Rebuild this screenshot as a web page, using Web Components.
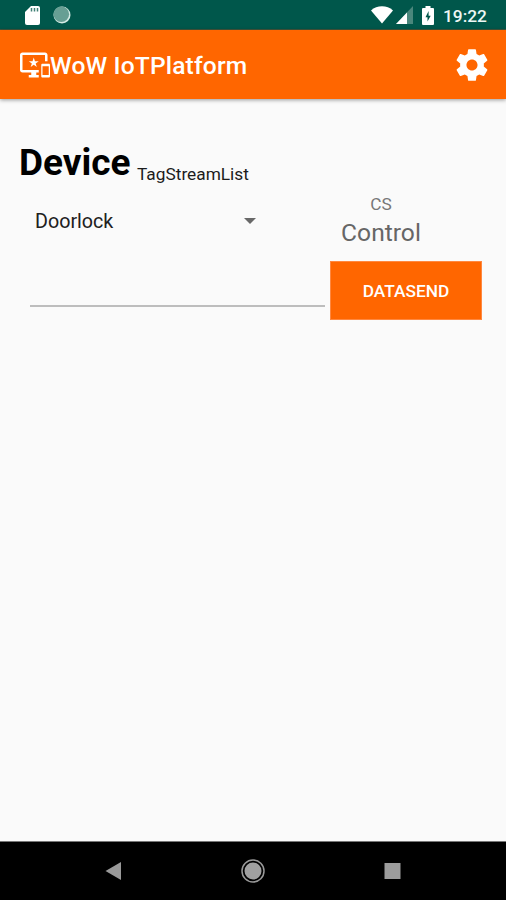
<!DOCTYPE html>
<html lang="en">
<head>
<meta charset="utf-8">
<title>WoW IoTPlatform</title>
<style>
html, body { margin: 0; height: 100%; }
body { font-family: Roboto, "Liberation Sans", sans-serif; background: #fafafa; overflow: hidden; }
</style>
</head>
<body>
<iot-app></iot-app>
<script>
const define = (name, html) => customElements.define(name, class extends HTMLElement {
  constructor() {
    super();
    const t = document.createElement('template');
    t.innerHTML = html;
    this.attachShadow({ mode: 'open' }).append(t.content.cloneNode(true));
  }
});

define('status-bar', `
<style>
:host { display: flex; align-items: center; height: 30px; box-sizing: border-box; background: #00574b; color: #fff; padding: 0 18px 0 25px; border-bottom: 1px solid #44553c; }
svg { display: block; flex: none; }
.sync { margin-left: 12px; margin-right: auto; }
.signal { margin-left: 3px; }
.battery { margin-left: 9px; }
.time { margin-left: 9px; font-size: 17.3px; font-weight: 500; line-height: 20px; padding-top: 2px; width: 45px; white-space: nowrap; color: #eef7f5; }
</style>
<svg width="16" height="20" viewBox="0 0 16 20"><path fill="#fff" d="M6 1h7a2 2 0 0 1 2 2v15a2 2 0 0 1-2 2H2a2 2 0 0 1-2-2V7z"/><path stroke="#3f8075" stroke-width="1.500" d="M6.500 3v3.500M9.500 3v3.500M12.500 3v3.500"/></svg>
<svg class="sync" width="18" height="19" viewBox="0 0 18 19"><circle cx="9" cy="10" r="8.500" fill="#d5ebe5"/><circle cx="8.300" cy="9.300" r="7.800" fill="#679f94"/></svg>
<svg width="22" height="19" viewBox="0 0 22 19"><path fill="#fff" d="M0 5.500C6-.1 16-.1 22 5.500L11 18.500z"/></svg>
<svg class="signal" width="17" height="18" viewBox="0 0 17 18"><path fill="#4a877c" d="M17 0v18H0z"/><path fill="#fff" d="M11 6.400V18H0z"/></svg>
<svg class="battery" width="12" height="20" viewBox="0 0 12 20"><path fill="#fff" d="M3.500 1h5v2H11a1 1 0 0 1 1 1v15a1 1 0 0 1-1 1H1a1 1 0 0 1-1-1V4a1 1 0 0 1 1-1h2.500z"/><path fill="#00574b" d="M6.600 6 3.500 12.200h2v4.300L8.700 10.800H6.600z"/></svg>
<span class="time"><slot></slot></span>`);

define('app-bar', `
<style>
:host { display: flex; align-items: center; height: 69px; box-sizing: border-box; padding: 0 15px 0 20px; background: #ff6600; color: #fff; box-shadow: 0 1px 4px rgba(0,0,0,.4); }
svg { display: block; flex: none; fill: #fff; }
h1 { margin: 0 auto 0 0; padding-top: 2px; font-size: 24.6px; letter-spacing: .15px; line-height: 30px; font-weight: 500; white-space: nowrap; }
</style>
<svg width="30" height="30" viewBox="0 0 24 24"><path d="M23 11.010L18 11c-.55 0-1 .45-1 1v9c0 .55.45 1 1 1h5c.55 0 1-.45 1-1v-9c0-.55-.45-.99-1-.99zM23 20h-5v-7h5v7zM20 2H2C.89 2 0 2.890 0 4v12c0 1.100.89 2 2 2h7v2H7v2h8v-2h-2v-2h2v-2H2V4h18v5h2V4c0-1.110-.9-2-2-2zm-8.030 7L11 6l-.97 3H7l2.470 1.760-.94 2.910 2.470-1.800 2.470 1.800-.94-2.910L15 9h-3.030z"/></svg>
<h1><slot></slot></h1>
<svg width="38" height="38" viewBox="0 0 24 24"><path d="M19.430 12.980c.04-.32.07-.64.07-.98s-.03-.66-.07-.98l2.110-1.650c.19-.15.24-.42.12-.64l-2-3.460c-.12-.22-.39-.3-.61-.22l-2.490 1c-.52-.4-1.080-.73-1.690-.98l-.38-2.650C14.460 2.180 14.250 2 14 2h-4c-.25 0-.46.18-.49.42l-.38 2.650c-.61.25-1.170.59-1.690.98l-2.490-1c-.23-.09-.49 0-.61.22l-2 3.460c-.13.22-.07.49.12.64l2.110 1.650c-.04.32-.07.65-.07.98s.03.66.07.98l-2.110 1.650c-.19.15-.24.42-.12.64l2 3.460c.12.22.39.3.61.22l2.490-1c.52.4 1.080.73 1.690.98l.38 2.650c.03.24.24.42.49.42h4c.25 0 .46-.18.49-.42l.38-2.650c.61-.25 1.170-.59 1.690-.98l2.490 1c.23.09.49 0 .61-.22l2-3.460c.12-.22.07-.49-.12-.64l-2.110-1.650zM12 15.500c-1.930 0-3.500-1.570-3.500-3.500s1.570-3.500 3.500-3.500 3.500 1.570 3.500 3.500-1.570 3.500-3.500 3.500z"/></svg>`);

define('device-heading', `
<style>
:host { display: flex; align-items: baseline; height: 44px; white-space: nowrap; color: #000; }
h2 { margin: 0; width: 118px; font-size: 37px; line-height: 44px; font-weight: 700; }
span { font-size: 17.3px; line-height: 20px; color: #1c1c1c; position: relative; top: 5px; }
</style>
<h2><slot></slot></h2><span><slot name="sub"></slot></span>`);

define('device-select', `
<style>
:host { display: flex; align-items: center; justify-content: space-between; width: 221px; height: 30px; font-size: 19.7px; line-height: 30px; color: #202020; }
svg { display: block; margin-bottom: 2px; }
</style>
<span><slot></slot></span>
<svg width="12" height="6" viewBox="0 0 12 6"><path fill="#686868" d="M0 0h12L6 6z"/></svg>`);

define('control-label', `
<style>
:host { display: flex; flex-direction: column; align-items: center; width: 102px; color: #666; }
.small { font-size: 17.3px; line-height: 20px; color: #777; }
.large { font-size: 24.6px; line-height: 38px; height: 36px; }
</style>
<span class="small"><slot name="type"></slot></span><span class="large"><slot></slot></span>`);

define('text-entry', `
<style>
:host { display: block; width: 295px; height: 46px; box-sizing: border-box; border-bottom: 2px solid #bdbdbd; }
</style>`);

define('send-button', `
<style>
:host { display: block; }
button { display: block; width: 152px; height: 59px; border: 1px solid #ff8840; padding: 0; background: #ff6600; color: #fff; font: 500 17.3px/20px Roboto, sans-serif; }
</style>
<button><slot></slot></button>`);

define('nav-bar', `
<style>
:host { display: flex; align-items: center; justify-content: space-between; height: 59px; box-sizing: border-box; padding: 0 105px; background: #000; border-top: 1px solid #777; }
svg { display: block; }
</style>
<svg width="17" height="20" viewBox="0 0 17 20"><path fill="#999" d="M16 1v18L.5 10z"/></svg>
<svg width="26" height="26" viewBox="0 0 26 26"><circle cx="13" cy="13" r="11" fill="none" stroke="#999" stroke-width="1.500"/><circle cx="13" cy="13" r="8.500" fill="#a0a0a0"/></svg>
<svg width="17" height="18" viewBox="0 0 17 18"><path fill="#9c9c9c" d="M.5 1h16v16H.5z"/></svg>`);

define('iot-app', `
<style>
:host { display: flex; flex-direction: column; height: 900px; width: 506px; background: #fafafa; }
main { flex: 1; padding: 42px 24px 0 19px; }
.choice { display: flex; justify-content: space-between; padding: 9px 50px 0 16px; }
.choice device-select { margin-top: 13px; }
.entry { display: flex; justify-content: space-between; padding: 11px 0 0 11px; }
</style>
<status-bar>19:22</status-bar>
<app-bar>WoW IoTPlatform</app-bar>
<main>
  <device-heading>Device<span slot="sub">TagStreamList</span></device-heading>
  <div class="choice">
    <device-select>Doorlock</device-select>
    <control-label><span slot="type">CS</span>Control</control-label>
  </div>
  <div class="entry"><text-entry></text-entry><send-button>DATASEND</send-button></div>
</main>
<nav-bar></nav-bar>`);
</script>
</body>
</html>
